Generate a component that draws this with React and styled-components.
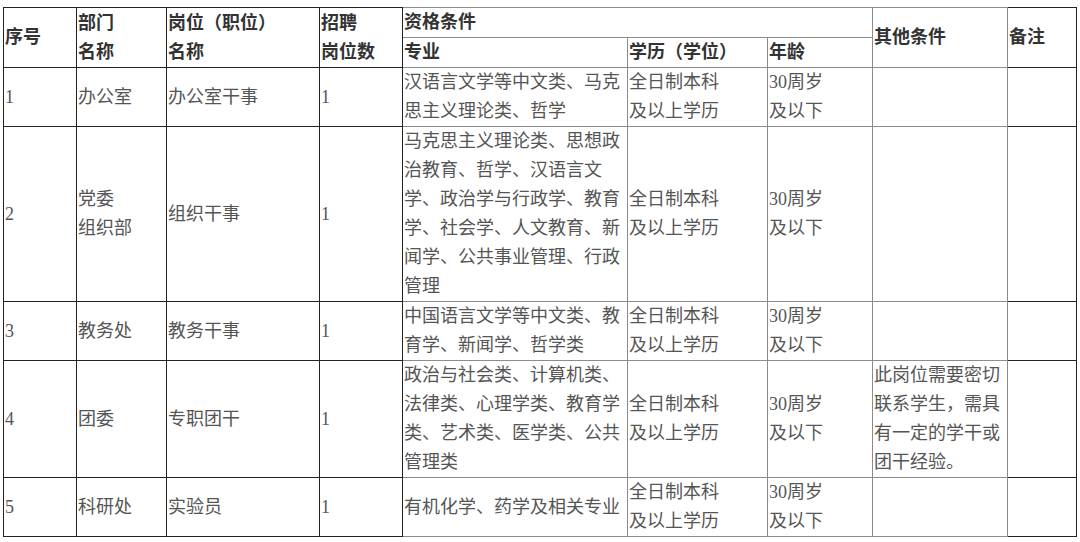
import React from 'react';
import styled, { createGlobalStyle } from 'styled-components';

const GlobalStyle = createGlobalStyle`
  html, body {
    margin: 0;
    padding: 0;
    background: #ffffff;
  }
  body {
    font-family: "Liberation Serif", "Noto Sans CJK SC", serif;
  }
`;

const Page = styled.div`
  padding: 7px 0 0 3px;
`;

const Table = styled.table`
  width: 1073px;
  table-layout: fixed;
  border-collapse: collapse;
  font-size: 18px;
  line-height: 29px;
  color: #555;
`;

const HeadCell = styled.th`
  border: 1px solid ${(p) => (p.$soft ? '#8c8c8c' : '#222')};
  padding: 0 1px;
  font-weight: 700;
  color: #333;
  text-align: left;
  vertical-align: middle;
`;

const Cell = styled.td`
  border: 1px solid ${(p) => (p.$soft ? '#8c8c8c' : '#222')};
  padding: 0 1px;
  text-align: left;
  vertical-align: middle;
  word-break: break-all;
`;

const Row = styled.tr`
  height: ${(p) => p.$h}px;
`;

const widths = [73, 90, 153, 83, 225, 140, 105, 135, 69];

const edu = ['全日制本科', '及以上学历'];
const age = ['30周岁', '及以下'];

const rows = [
  {
    h: 59,
    no: '1',
    dept: ['办公室'],
    post: '办公室干事',
    major: '汉语言文学等中文类、马克思主义理论类、哲学',
    other: '',
  },
  {
    h: 173,
    no: '2',
    dept: ['党委', '组织部'],
    post: '组织干事',
    major:
      '马克思主义理论类、思想政治教育、哲学、汉语言文学、政治学与行政学、教育学、社会学、人文教育、新闻学、公共事业管理、行政管理',
    other: '',
  },
  {
    h: 58,
    no: '3',
    dept: ['教务处'],
    post: '教务干事',
    major: '中国语言文学等中文类、教育学、新闻学、哲学类',
    other: '',
  },
  {
    h: 117,
    no: '4',
    dept: ['团委'],
    post: '专职团干',
    major: '政治与社会类、计算机类、法律类、心理学类、教育学类、艺术类、医学类、公共管理类',
    other: '此岗位需要密切联系学生，需具有一定的学干或团干经验。',
  },
  {
    h: 59,
    no: '5',
    dept: ['科研处'],
    post: '实验员',
    major: '有机化学、药学及相关专业',
    other: '',
  },
];

const Lines = ({ items }) =>
  items.map((t, i) => (
    <React.Fragment key={i}>
      {i > 0 && <br />}
      {t}
    </React.Fragment>
  ));

export default function App() {
  return (
    <Page>
      <GlobalStyle />
      <Table>
        <colgroup>
          {widths.map((w, i) => (
            <col key={i} style={{ width: w }} />
          ))}
        </colgroup>
        <thead>
          <Row $h={30}>
            <HeadCell rowSpan={2}>序号</HeadCell>
            <HeadCell rowSpan={2}>
              <Lines items={['部门', '名称']} />
            </HeadCell>
            <HeadCell rowSpan={2}>
              <Lines items={['岗位（职位）', '名称']} />
            </HeadCell>
            <HeadCell rowSpan={2}>
              <Lines items={['招聘', '岗位数']} />
            </HeadCell>
            <HeadCell colSpan={3} $soft>
              资格条件
            </HeadCell>
            <HeadCell rowSpan={2} $soft>
              其他条件
            </HeadCell>
            <HeadCell rowSpan={2}>备注</HeadCell>
          </Row>
          <Row $h={28}>
            <HeadCell $soft>专业</HeadCell>
            <HeadCell $soft>学历（学位）</HeadCell>
            <HeadCell $soft>年龄</HeadCell>
          </Row>
        </thead>
        <tbody>
          {rows.map((r) => (
            <Row key={r.no} $h={r.h}>
              <Cell>{r.no}</Cell>
              <Cell>
                <Lines items={r.dept} />
              </Cell>
              <Cell>{r.post}</Cell>
              <Cell>1</Cell>
              <Cell $soft>{r.major}</Cell>
              <Cell $soft>
                <Lines items={edu} />
              </Cell>
              <Cell $soft>
                <Lines items={age} />
              </Cell>
              <Cell $soft>{r.other}</Cell>
              <Cell>{''}</Cell>
            </Row>
          ))}
        </tbody>
      </Table>
    </Page>
  );
}
